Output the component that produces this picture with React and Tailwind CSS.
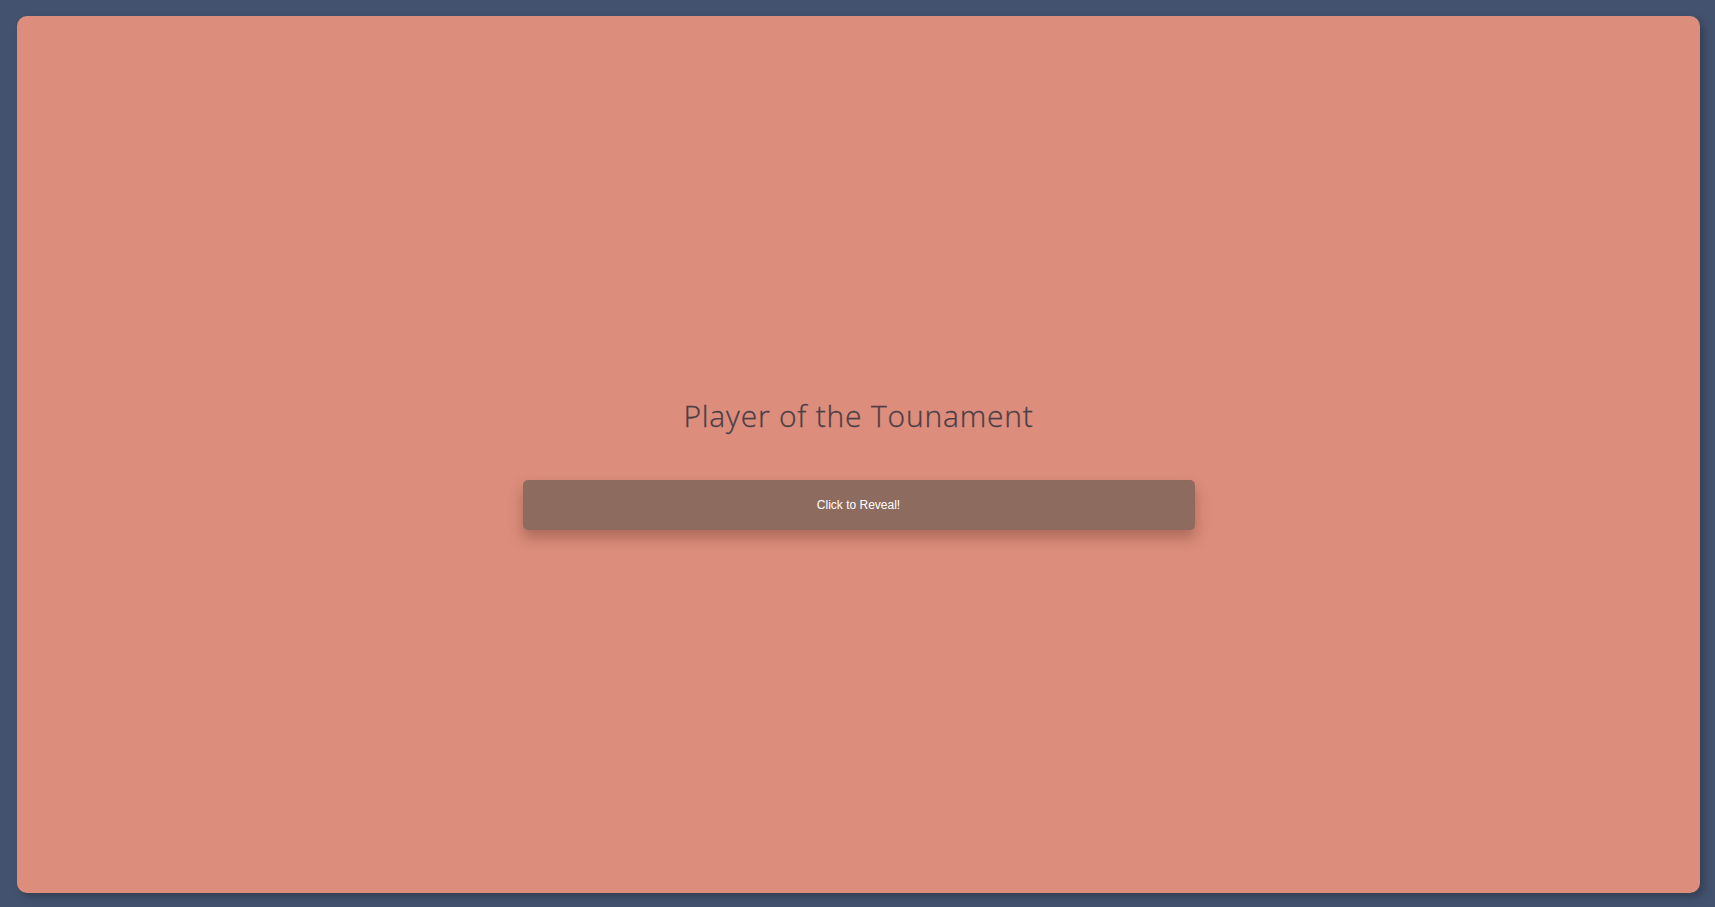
import React from 'react'

export default function App() {
  return (
    <div className="h-[907px] w-[1715px] bg-[#43536f] pl-[17px] pr-[15px] pt-4 pb-[14px]">
      <div className="flex h-full w-full flex-col items-center justify-center rounded-[10px] bg-[#dc8d7b] pt-[14px] shadow-[4px_4px_8px_rgba(0,0,0,0.25)]">
        <h1 className="font-['Open_Sans',sans-serif] text-[30px] font-light leading-[45px] tracking-[0.8px] text-[#4b3e47] [-webkit-text-stroke:0.3px_#4b3e47]">
          Player of the Tounament
        </h1>
        <button className="mt-[42px] h-[50px] w-[672px] rounded-[5px] bg-[#8e6b5f] font-['Liberation_Sans',Arial,sans-serif] text-[12px] text-white shadow-[0_8px_14px_rgba(90,40,30,0.35)]">
          Click to Reveal!
        </button>
      </div>
    </div>
  )
}
